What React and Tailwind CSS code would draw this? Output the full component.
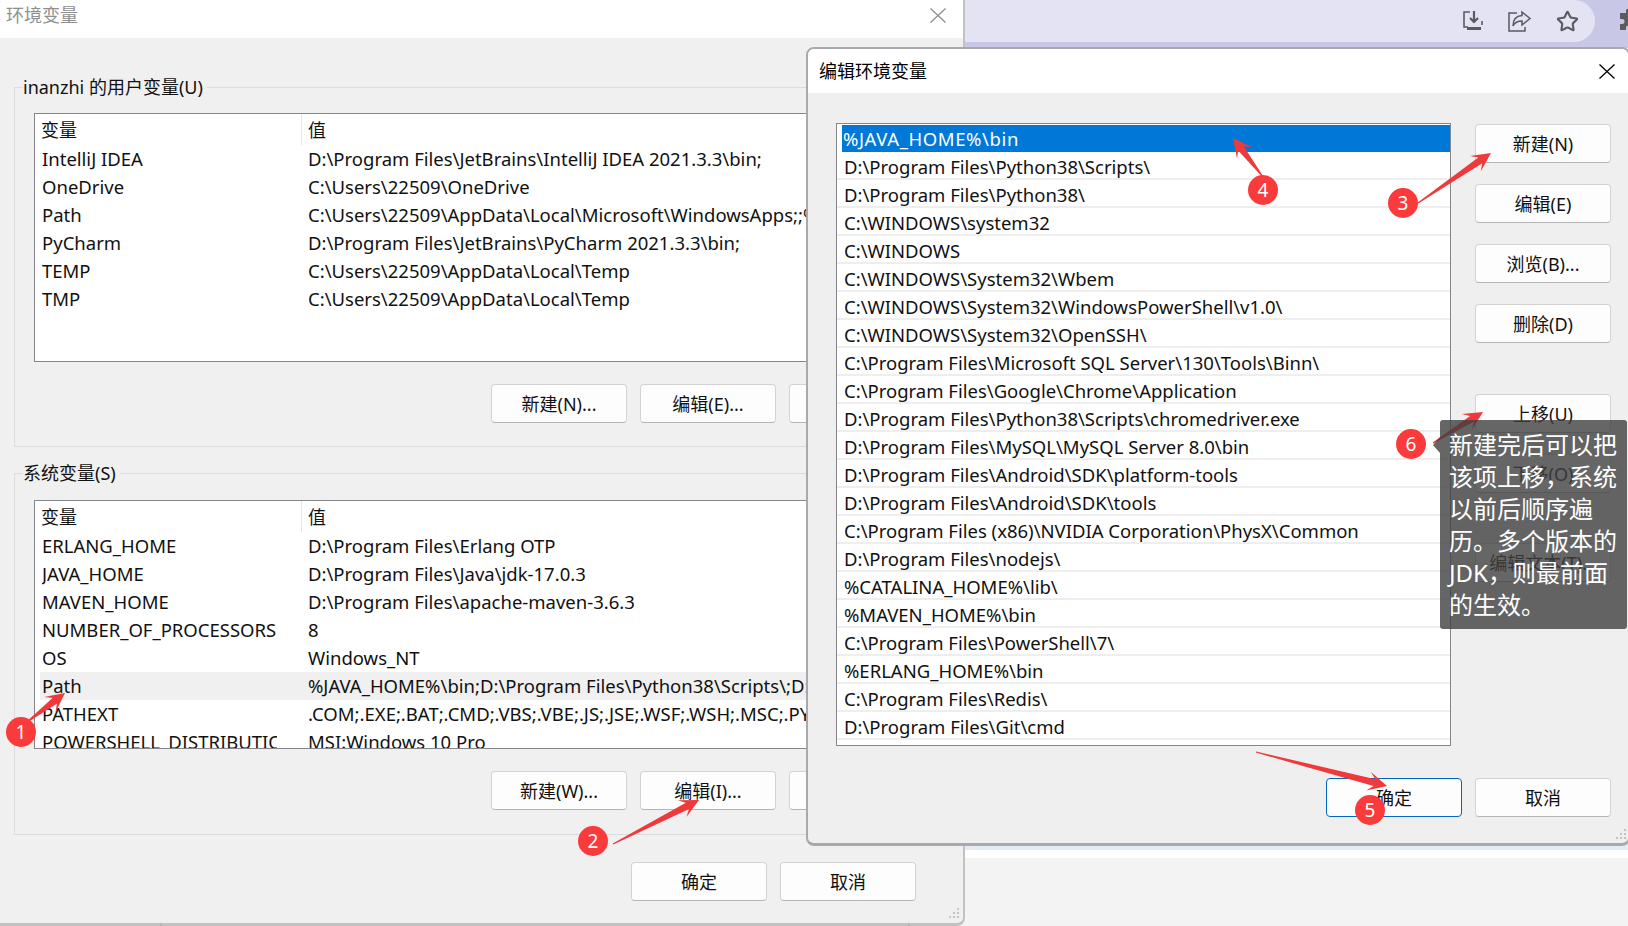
import React from 'react';
import { Star } from 'lucide-react';

const userVars = [
  ['IntelliJ IDEA', 'D:\\Program Files\\JetBrains\\IntelliJ IDEA 2021.3.3\\bin;'],
  ['OneDrive', 'C:\\Users\\22509\\OneDrive'],
  ['Path', 'C:\\Users\\22509\\AppData\\Local\\Microsoft\\WindowsApps;;%USERPROFILE%\\AppData'],
  ['PyCharm', 'D:\\Program Files\\JetBrains\\PyCharm 2021.3.3\\bin;'],
  ['TEMP', 'C:\\Users\\22509\\AppData\\Local\\Temp'],
  ['TMP', 'C:\\Users\\22509\\AppData\\Local\\Temp'],
];

const systemVars = [
  ['ERLANG_HOME', 'D:\\Program Files\\Erlang OTP'],
  ['JAVA_HOME', 'D:\\Program Files\\Java\\jdk-17.0.3'],
  ['MAVEN_HOME', 'D:\\Program Files\\apache-maven-3.6.3'],
  ['NUMBER_OF_PROCESSORS', '8'],
  ['OS', 'Windows_NT'],
  ['Path', '%JAVA_HOME%\\bin;D:\\Program Files\\Python38\\Scripts\\;D:\\Program Files'],
  ['PATHEXT', '.COM;.EXE;.BAT;.CMD;.VBS;.VBE;.JS;.JSE;.WSF;.WSH;.MSC;.PY;.PYW'],
  ['POWERSHELL_DISTRIBUTION_CHANNEL', 'MSI:Windows 10 Pro'],
];

const pathEntries = [
  '%JAVA_HOME%\\bin',
  'D:\\Program Files\\Python38\\Scripts\\',
  'D:\\Program Files\\Python38\\',
  'C:\\WINDOWS\\system32',
  'C:\\WINDOWS',
  'C:\\WINDOWS\\System32\\Wbem',
  'C:\\WINDOWS\\System32\\WindowsPowerShell\\v1.0\\',
  'C:\\WINDOWS\\System32\\OpenSSH\\',
  'C:\\Program Files\\Microsoft SQL Server\\130\\Tools\\Binn\\',
  'C:\\Program Files\\Google\\Chrome\\Application',
  'D:\\Program Files\\Python38\\Scripts\\chromedriver.exe',
  'D:\\Program Files\\MySQL\\MySQL Server 8.0\\bin',
  'D:\\Program Files\\Android\\SDK\\platform-tools',
  'D:\\Program Files\\Android\\SDK\\tools',
  'C:\\Program Files (x86)\\NVIDIA Corporation\\PhysX\\Common',
  'D:\\Program Files\\nodejs\\',
  '%CATALINA_HOME%\\lib\\',
  '%MAVEN_HOME%\\bin',
  'C:\\Program Files\\PowerShell\\7\\',
  '%ERLANG_HOME%\\bin',
  'C:\\Program Files\\Redis\\',
  'D:\\Program Files\\Git\\cmd',
];

// tail x, tail y, tip x, tip y
const arrows = [
  [27, 722, 65, 693],
  [613, 844, 699, 800],
  [1418, 203, 1491, 153],
  [1263, 177, 1233, 138],
  [1256, 752, 1387, 786],
  [1433, 443, 1483, 412],
];

const badges = [
  ['1', 'left-[6px] top-[717px]'],
  ['2', 'left-[578px] top-[826px]'],
  ['3', 'left-[1388px] top-[188px]'],
  ['4', 'left-[1248px] top-[175px]'],
  ['5', 'left-[1355px] top-[795px]'],
  ['6', 'left-[1396px] top-[429px]'],
];

const arrowPoints = ([x1, y1, x2, y2]) => {
  const len = Math.hypot(x2 - x1, y2 - y1);
  const ux = (x2 - x1) / len;
  const uy = (y2 - y1) / len;
  const at = (back, side) => `${x2 - ux * back - uy * side},${y2 - uy * back + ux * side}`;
  return [
    at(len, 0.6),
    at(13, 3.5),
    at(19, 9.5),
    at(0, 0),
    at(19, -9.5),
    at(13, -3.5),
    at(len, -0.6),
  ].join(' ');
};

const Button = ({ children, className = '' }) => (
  <button
    type="button"
    className={`h-[39px] w-[136px] shrink-0 rounded-[4px] border border-[#d3d3d3] border-b-[#b5b5b5] bg-[#fdfdfd] text-[18px] leading-none text-[#111] ${className}`}
  >
    {children}
  </button>
);

const CloseIcon = ({ className }) => (
  <svg width="16" height="15" viewBox="0 0 16 15" fill="none" stroke="currentColor" strokeWidth="1.3" className={className}>
    <path d="M0.500 0.500l15 14M15.500 0.500l-15 14" />
  </svg>
);

const VarList = ({ rows, active }) => (
  <div className="ml-[19px] h-[249px] w-[920px] overflow-hidden border border-[#85858c] bg-white text-[18.5px]">
    <div className="flex h-[31px] items-center text-[18px]">
      <div className="h-full w-[267px] border-r border-[#e5e5e5] pl-[6px] leading-[32px]">变量</div>
      <div className="pl-[6px] leading-[32px]">值</div>
    </div>
    {rows.map(([name, value]) => (
      <div key={name} className={`ml-[5px] flex h-[28px] pl-[2px] leading-[28px] ${name === active ? 'bg-[#f0f0f0]' : ''}`}>
        <div className="mr-[31px] w-[235px] shrink-0 overflow-hidden whitespace-nowrap">{name}</div>
        <div className="whitespace-nowrap">{value}</div>
      </div>
    ))}
  </div>
);

const GroupBox = ({ title, rows, active, buttons, listGap, className = '' }) => (
  <fieldset className={`border border-[#dcdcdc] ${className}`}>
    <legend className="ml-[8px] h-[24px] pr-[4px] leading-[24px]">{title}</legend>
    <div className={listGap}>
      <VarList rows={rows} active={active} />
    </div>
    <div className="mt-[22px] flex gap-[13px] pl-[476px]">
      {buttons.map((b) => (
        <Button key={b}>{b}</Button>
      ))}
    </div>
  </fieldset>
);

const ResizeGrip = ({ className }) => (
  <svg width="11" height="11" viewBox="0 0 11 11" className={`absolute ${className}`} fill="#c4c4c4">
    <rect x="8" y="0" width="2" height="2" />
    <rect x="4" y="4" width="2" height="2" />
    <rect x="8" y="4" width="2" height="2" />
    <rect x="0" y="8" width="2" height="2" />
    <rect x="4" y="8" width="2" height="2" />
    <rect x="8" y="8" width="2" height="2" />
  </svg>
);

const Toolbar = () => (
  <div className="flex h-[48px] shrink-0 overflow-hidden bg-[#c8c8e6] pb-[6px]">
    <div className="flex w-[632px] shrink-0 items-center justify-end gap-[24px] rounded-r-[21px] bg-[#e3e3f3] pr-[16px] text-[#5a5a5f]">
      <svg width="22" height="22" viewBox="0 0 22 22" fill="none" stroke="currentColor" strokeWidth="1.6">
        <path d="M8 2H2v15h4" />
        <path d="M12 1v10M8 8l4 4 4-4" strokeWidth="2.2" />
        <path d="M5 18.500h14" strokeWidth="3" />
        <path d="M20 11v4" />
      </svg>
      <svg width="24" height="22" viewBox="0 0 24 22" fill="none" stroke="currentColor" strokeWidth="1.5">
        <path d="M9 3H1v18h16v-4" />
        <path d="M14 2l8 6.500-8 6.500v-4c-4 0-7 1-9 5 0-6 3-10 9-10.500z" />
      </svg>
      <Star size={23} strokeWidth={2.2} />
    </div>
    <div className="pl-[22px] pt-[9px] text-[#5a5a5f]">
      <svg width="24" height="24" viewBox="0 0 24 24" fill="currentColor">
        <path d="M9 2a2.500 2.500 0 0 1 5 0v2h6v6h-2a2.500 2.500 0 0 0 0 5h2v6h-6v-2a2.500 2.500 0 0 0-5 0v2H3v-6h2a2.500 2.500 0 0 0 0-5H3V4h6z" />
      </svg>
    </div>
  </div>
);

const EnvDialog = () => (
  <div className="absolute left-0 top-0 h-[926px] w-[965px] overflow-hidden rounded-br-[8px] border-r-2 border-b-[3px] border-[#c2c2c2] bg-[#f0f0f0]">
    <div className="flex h-[38px] items-center justify-between bg-white pl-[6px] pr-[17px] text-[#8f8f8f]">
      <span className="-mt-[8px]">环境变量</span>
      <CloseIcon className="-mt-[8px]" />
    </div>
    <div className="px-[14px] pt-[37px]">
      <GroupBox
        title="inanzhi 的用户变量(U)"
        rows={userVars}
        buttons={['新建(N)...', '编辑(E)...', '删除(L)']}
        listGap="mt-[14px]"
        className="h-[372px]"
      />
      <GroupBox
        title="系统变量(S)"
        rows={systemVars}
        active="Path"
        buttons={['新建(W)...', '编辑(I)...', '删除(L)']}
        listGap="mt-[15px]"
        className="mt-[14px] h-[374px]"
      />
      <div className="mt-[27px] flex justify-end gap-[13px] pr-[33px]">
        <Button>确定</Button>
        <Button>取消</Button>
      </div>
    </div>
    <ResizeGrip className="bottom-[4px] right-[3px]" />
  </div>
);

const EditDialog = () => (
  <div className="absolute left-[806px] top-[47px] h-[799px] w-[824px] overflow-hidden rounded-[8px] border-2 border-b-[3px] border-[#a9a9ad] bg-[#efefef] text-[18.5px]">
    <div className="flex h-[44px] items-center justify-between bg-white px-[11px] text-[18px] text-black">
      <span>编辑环境变量</span>
      <CloseIcon className="mr-[2px]" />
    </div>
    <div className="flex gap-[24px] pl-[28px] pt-[30px]">
      <div className="h-[623px] w-[615px] shrink-0 border border-[#85858c] bg-white pt-[1px]">
        {pathEntries.map((p, i) =>
          i === 0 ? (
            <div key={p} className="ml-[5px] h-[27px] bg-[#0078d7] pl-[1px] leading-[28px] tracking-[0.6px] text-white">{p}</div>
          ) : (
            <div key={p} className="h-[28px] border-b-2 border-[#eeeeee] pl-[7px] leading-[29px]">{p}</div>
          ),
        )}
      </div>
      <div className="mt-[1px] flex flex-col">
        <Button>新建(N)</Button>
        <Button className="mt-[21px]">编辑(E)</Button>
        <Button className="mt-[21px]">浏览(B)...</Button>
        <Button className="mt-[21px]">删除(D)</Button>
        <Button className="mt-[51px]">上移(U)</Button>
        <Button className="mt-[21px]">下移(O)</Button>
        <Button className="mt-[50px]">编辑文本(T)...</Button>
      </div>
    </div>
    <div className="mt-[32px] flex justify-end gap-[13px] pr-[17px]">
      <Button className="!border-[#0067c0]">确定</Button>
      <Button>取消</Button>
    </div>
    <ResizeGrip className="bottom-[3px] right-[1px]" />
  </div>
);

const Annotations = () => (
  <>
    <svg className="absolute left-0 top-0" width="1628" height="926" viewBox="0 0 1628 926">
      {arrows.map((a) => (
        <polygon key={a.join()} points={arrowPoints(a)} fill="#f0393a" />
      ))}
    </svg>
    {badges.map(([n, pos]) => (
      <div
        key={n}
        className={`absolute flex h-[30px] w-[30px] items-center justify-center rounded-full bg-[#fb3a3c] text-[19px] text-white ${pos}`}
      >
        {n}
      </div>
    ))}
    <div className="absolute left-[1440px] top-[420px] h-[209px] w-[187px] rounded-[3px] bg-[#404040]/80 pl-[9px] pt-[9px] text-[24px] leading-[32px] text-white">
      <div className="absolute -left-[7px] top-[17px] h-0 w-0 border-y-[8px] border-r-[7px] border-y-transparent border-r-[#404040]/80" />
      新建完后可以把
      <br />
      该项上移，系统
      <br />
      以前后顺序遍
      <br />
      历。多个版本的
      <br />
      JDK，则最前面
      <br />
      的生效。
    </div>
  </>
);

export default function App() {
  return (
    <div className="relative h-[926px] w-[1628px] overflow-hidden bg-[#f3f3f3] font-['Noto_Sans','Noto_Sans_CJK_SC',sans-serif] text-[18px] text-[#111]">
      {/* page behind the dialogs */}
      <div className="flex h-full flex-col pl-[963px]">
        <Toolbar />
        <div className="h-[796px] shrink-0" />
        <div className="h-[6px] shrink-0 bg-[#e4ecf6]" />
        <div className="h-[8px] shrink-0 bg-white" />
      </div>
      <EnvDialog />
      <EditDialog />
      <div className="absolute bottom-0 left-[160px] h-[3px] w-[2px] bg-[#b5b5b5]" />
      <div className="absolute bottom-0 left-[908px] h-[3px] w-[2px] bg-[#b5b5b5]" />
      <Annotations />
    </div>
  );
}
